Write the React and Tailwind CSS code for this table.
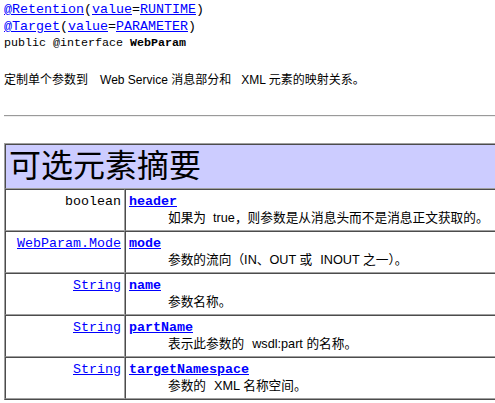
const Gap = ({ w = "w-[8px]" }) => <span className={`inline-block ${w}`} />;

export default function App() {
  const mono = "font-['Liberation_Mono',monospace]";
  const sans = "font-['Liberation_Sans','Noto_Sans_CJK_SC',sans-serif]";
  const link = "text-[#0000ff] underline";
  const rows = [
    { type: "boolean", typeLink: false, name: "header", desc: <>如果为<Gap w="w-[7px]" />true，则参数是从消息头而不是消息正文获取的。</> },
    { type: "WebParam.Mode", typeLink: true, name: "mode", desc: <>参数的流向（IN、OUT 或<Gap />INOUT 之一）。</> },
    { type: "String", typeLink: true, name: "name", desc: <>参数名称。</> },
    { type: "String", typeLink: true, name: "partName", desc: <>表示此参数的<Gap />wsdl:part 的名称。</> },
    { type: "String", typeLink: true, name: "targetNamespace", desc: <>参数的<Gap />XML 名称空间。</> },
  ];
  return (
    <div className="w-[495px] h-[403px] overflow-hidden bg-white text-black">
      <div className="w-[560px] pl-[4px] pt-[1px]">
        <div className={`${mono} text-[13.33px] leading-[17px] whitespace-pre`}>
          <div>
            <a className={link}>@Retention</a>(<a className={link}>value</a>=<a className={link}>RUNTIME</a>)
          </div>
          <div>
            <a className={link}>@Target</a>(<a className={link}>value</a>=<a className={link}>PARAMETER</a>)
          </div>
        </div>
        <div className={`${mono} text-[11.67px] leading-[17px] whitespace-pre`}>
          public @interface <b>WebParam</b>
        </div>
        <p className={`${sans} mt-[20px] text-[12px] leading-[16px] whitespace-pre`}>
          定制单个参数到<Gap w="w-[12px]" />Web Service 消息部分和<Gap w="w-[10px]" />XML 元素的映射关系。
        </p>
        <hr className="mt-[27px] h-0 border-0 border-t border-b border-t-[#9a9a9a] border-b-[#eeeeee]" />
        <table className="mt-[26px] w-[540px] table-fixed border-separate border-spacing-0 border border-[#a0a0a0] [border-style:outset]">
          <colgroup>
            <col className="w-[120px]" />
            <col />
          </colgroup>
          <tbody>
            <tr className="bg-[#ccccff]">
              <th colSpan={2} className="border border-[#a0a0a0] [border-style:inset] p-[3px] text-left font-normal">
                <span className={`${sans} text-[32px] leading-[37px] block`}>可选元素摘要</span>
              </th>
            </tr>
            {rows.map((r) => (
              <tr key={r.name} className="bg-white">
                <td className="border border-[#a0a0a0] [border-style:inset] p-[3px] align-top text-right">
                  <div className={`${mono} text-[13.33px] leading-[17px]`}>
                    {r.typeLink ? <a className={link}>{r.type}</a> : r.type}
                  </div>
                </td>
                <td className="border border-[#a0a0a0] [border-style:inset] p-[3px] align-top text-left">
                  <div className={`${mono} text-[13.33px] leading-[17px] font-bold`}>
                    <a className={link}>{r.name}</a>
                  </div>
                  <div className={`${sans} pl-[39px] text-[12.7px] leading-[17px] whitespace-pre`}>{r.desc}</div>
                </td>
              </tr>
            ))}
          </tbody>
        </table>
      </div>
    </div>
  );
}
